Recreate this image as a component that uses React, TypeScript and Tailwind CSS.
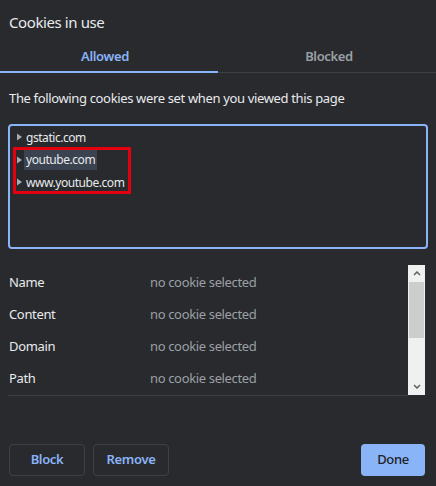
import React from 'react';

const font = { fontFamily: '"Noto Sans", "Open Sans", Arial, sans-serif' };

const Caret = () => (
  <svg width="5" height="8" viewBox="0 0 5 8" className="mr-[2px] shrink-0">
    <path d="M0 0.5 L5 4 L0 7.5 Z" fill="#a8acb2" />
  </svg>
);

const TreeRow = ({ label, selected }: { label: string; selected?: boolean }) => (
  <div className="flex h-[22.5px] items-center pl-[7px]">
    <Caret />
    <span
      className={
        'px-[2px] leading-[21px] ' + (selected ? 'bg-[#3c4350]' : '')
      }
    >
      {label}
    </span>
  </div>
);

const DetailRow = ({ label }: { label: string }) => (
  <div className="flex h-[32px] items-center">
    <span className="w-[150px] pl-[9px] text-[#e8eaed]">{label}</span>
    <span className="text-[#9aa0a6]">no cookie selected</span>
  </div>
);

const App = () => {
  return (
    <div
      className="relative flex h-[486px] w-[436px] flex-col bg-[#292a2d] text-[13px] tracking-[-0.35px] text-[#e8eaed]"
      style={font}
    >
      <div className="flex h-[42px] items-center pl-[9px] pt-[2px] text-[15px] tracking-[-0.4px]">
        Cookies in use
      </div>

      <div className="flex h-[31px] border-b border-[#3f4043] text-[13px] font-semibold">
        <div className="relative flex w-[218px] items-center justify-center pr-[8px] text-[#8ab4f8]">
          Allowed
          <div className="absolute bottom-[-1px] left-0 right-0 h-[2px] bg-[#8ab4f8]" />
        </div>
        <div className="flex flex-1 items-center justify-center pl-[4px] text-[#9aa0a6]">
          Blocked
        </div>
      </div>

      <div className="flex h-[51px] items-center pl-[9px]">
        The following cookies were set when you viewed this page
      </div>

      <div className="mx-[8px] h-[125px] rounded-[4px] border-2 border-[#8ab4f8] text-[12px] tracking-[-0.45px]">
        <TreeRow label="gstatic.com" />
        <TreeRow label="youtube.com" selected />
        <TreeRow label="www.youtube.com" />
      </div>

      <div className="mt-[16px] flex h-[131px] border-b border-[#3f4043] ml-[8px] mr-[28px]">
        <div className="-ml-[8px] flex-1 pt-[2px]">
          <DetailRow label="Name" />
          <DetailRow label="Content" />
          <DetailRow label="Domain" />
          <DetailRow label="Path" />
        </div>
      </div>

      <div className="absolute left-[408px] top-[265px] flex h-[130px] w-[17px] flex-col bg-[#f0f0f0]">
        <div className="flex h-[17px] items-center justify-center">
          <svg width="8" height="5" viewBox="0 0 8 5">
            <path d="M1 4 L4 1 L7 4" stroke="#606060" strokeWidth="1.5" fill="none" />
          </svg>
        </div>
        <div className="mx-[1px] h-[56px] bg-[#cdcdcd]" />
        <div className="flex-1" />
        <div className="flex h-[17px] items-center justify-center">
          <svg width="8" height="5" viewBox="0 0 8 5">
            <path d="M1 1 L4 4 L7 1" stroke="#606060" strokeWidth="1.5" fill="none" />
          </svg>
        </div>
      </div>

      <div className="mt-[48px] flex items-center px-[9px]">
        <button className="h-[32px] w-[76px] rounded-[4px] border border-[#3f4043] font-semibold text-[#8ab4f8]">
          Block
        </button>
        <button className="ml-[8px] h-[32px] w-[76px] rounded-[4px] border border-[#3f4043] font-semibold text-[#8ab4f8]">
          Remove
        </button>
        <button className="ml-auto mr-[2px] h-[32px] w-[64px] rounded-[4px] bg-[#8ab4f8] font-medium text-[#202124]">
          Done
        </button>
      </div>

      <div className="pointer-events-none absolute left-[13px] top-[147px] h-[47px] w-[118px] border-[3px] border-[#e4000f]" />
    </div>
  );
};

export default App;
